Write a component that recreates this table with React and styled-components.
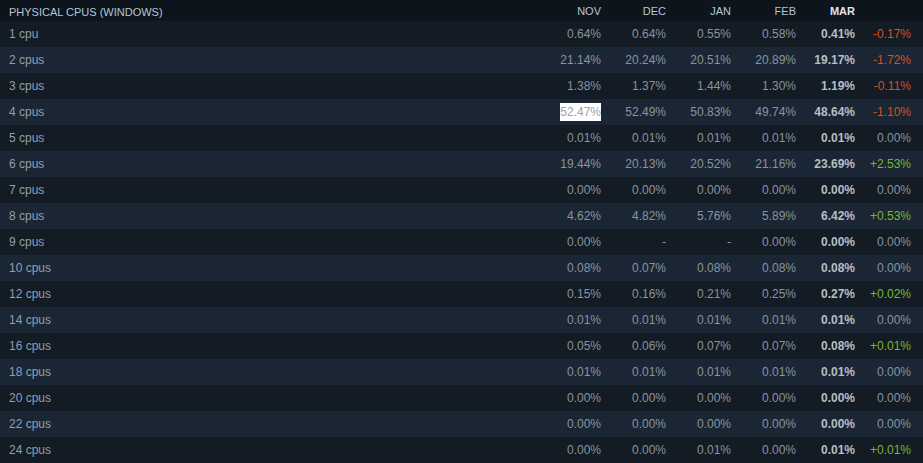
import React from "react";
import styled, { createGlobalStyle } from "styled-components";

const Global = createGlobalStyle`
  html, body { margin: 0; padding: 0; background: #121a24; }
  body { font-family: "Liberation Sans", Arial, sans-serif; }
`;

const Table = styled.div`
  width: 923px;
  display: flex;
  flex-direction: column;
  font-family: "Liberation Sans", Arial, sans-serif;
`;

const cols = "1fr 65px 65px 65px 65px 59px 56px";

const HeaderRow = styled.div`
  display: grid;
  grid-template-columns: ${cols};
  height: 21px;
  align-items: center;
  padding: 0 12px 0 9px;
  background: #0e141b;
  font-size: 11px;
`;

const Title = styled.div`
  color: #b3c6d6;
  text-transform: uppercase;
  padding-top: 2px;
`;

const Month = styled.div`
  text-align: right;
  padding-top: 1px;
  color: ${(p) => (p.$current ? "#dfe6ec" : "#b3c6d6")};
  font-weight: ${(p) => (p.$current ? "bold" : "normal")};
`;

const Row = styled.div`
  display: grid;
  grid-template-columns: ${cols};
  height: 26px;
  align-items: center;
  padding: 0 12px 0 9px;
  background: ${(p) => (p.$alt ? "#1a2634" : "#131b25")};
  font-size: 12px;
`;

const Label = styled.div`
  color: #8fa0b0;
`;

const Cell = styled.div`
  text-align: right;
  color: ${(p) => (p.$bold ? "#b6bec5" : "#8a949c")};
  font-weight: ${(p) => (p.$bold ? "bold" : "normal")};
`;

const Selected = styled.span`
  background: #ffffff;
  color: #9aa3ab;
  padding: 2px 0;
`;

const Diff = styled.div`
  text-align: right;
  color: ${(p) =>
    p.$dir === "down" ? "#d85024" : p.$dir === "up" ? "#79b72c" : "#8a949c"};
`;

const data = [
  ["1 cpu", "0.64%", "0.64%", "0.55%", "0.58%", "0.41%", "-0.17%"],
  ["2 cpus", "21.14%", "20.24%", "20.51%", "20.89%", "19.17%", "-1.72%"],
  ["3 cpus", "1.38%", "1.37%", "1.44%", "1.30%", "1.19%", "-0.11%"],
  ["4 cpus", "52.47%", "52.49%", "50.83%", "49.74%", "48.64%", "-1.10%"],
  ["5 cpus", "0.01%", "0.01%", "0.01%", "0.01%", "0.01%", "0.00%"],
  ["6 cpus", "19.44%", "20.13%", "20.52%", "21.16%", "23.69%", "+2.53%"],
  ["7 cpus", "0.00%", "0.00%", "0.00%", "0.00%", "0.00%", "0.00%"],
  ["8 cpus", "4.62%", "4.82%", "5.76%", "5.89%", "6.42%", "+0.53%"],
  ["9 cpus", "0.00%", "-", "-", "0.00%", "0.00%", "0.00%"],
  ["10 cpus", "0.08%", "0.07%", "0.08%", "0.08%", "0.08%", "0.00%"],
  ["12 cpus", "0.15%", "0.16%", "0.21%", "0.25%", "0.27%", "+0.02%"],
  ["14 cpus", "0.01%", "0.01%", "0.01%", "0.01%", "0.01%", "0.00%"],
  ["16 cpus", "0.05%", "0.06%", "0.07%", "0.07%", "0.08%", "+0.01%"],
  ["18 cpus", "0.01%", "0.01%", "0.01%", "0.01%", "0.01%", "0.00%"],
  ["20 cpus", "0.00%", "0.00%", "0.00%", "0.00%", "0.00%", "0.00%"],
  ["22 cpus", "0.00%", "0.00%", "0.00%", "0.00%", "0.00%", "0.00%"],
  ["24 cpus", "0.00%", "0.00%", "0.01%", "0.00%", "0.01%", "+0.01%"],
];

const dirOf = (d) => (d.startsWith("-") ? "down" : d.startsWith("+") ? "up" : "flat");

export default function App() {
  return (
    <>
      <Global />
      <Table>
        <HeaderRow>
          <Title>Physical CPUs (Windows)</Title>
          <Month>NOV</Month>
          <Month>DEC</Month>
          <Month>JAN</Month>
          <Month>FEB</Month>
          <Month $current>MAR</Month>
          <Month />
        </HeaderRow>
        {data.map((r, i) => (
          <Row key={r[0]} $alt={i % 2 === 1}>
            <Label>{r[0]}</Label>
            <Cell>{i === 3 ? <Selected>{r[1]}</Selected> : r[1]}</Cell>
            <Cell>{r[2]}</Cell>
            <Cell>{r[3]}</Cell>
            <Cell>{r[4]}</Cell>
            <Cell $bold>{r[5]}</Cell>
            <Diff $dir={dirOf(r[6])}>{r[6]}</Diff>
          </Row>
        ))}
      </Table>
    </>
  );
}
